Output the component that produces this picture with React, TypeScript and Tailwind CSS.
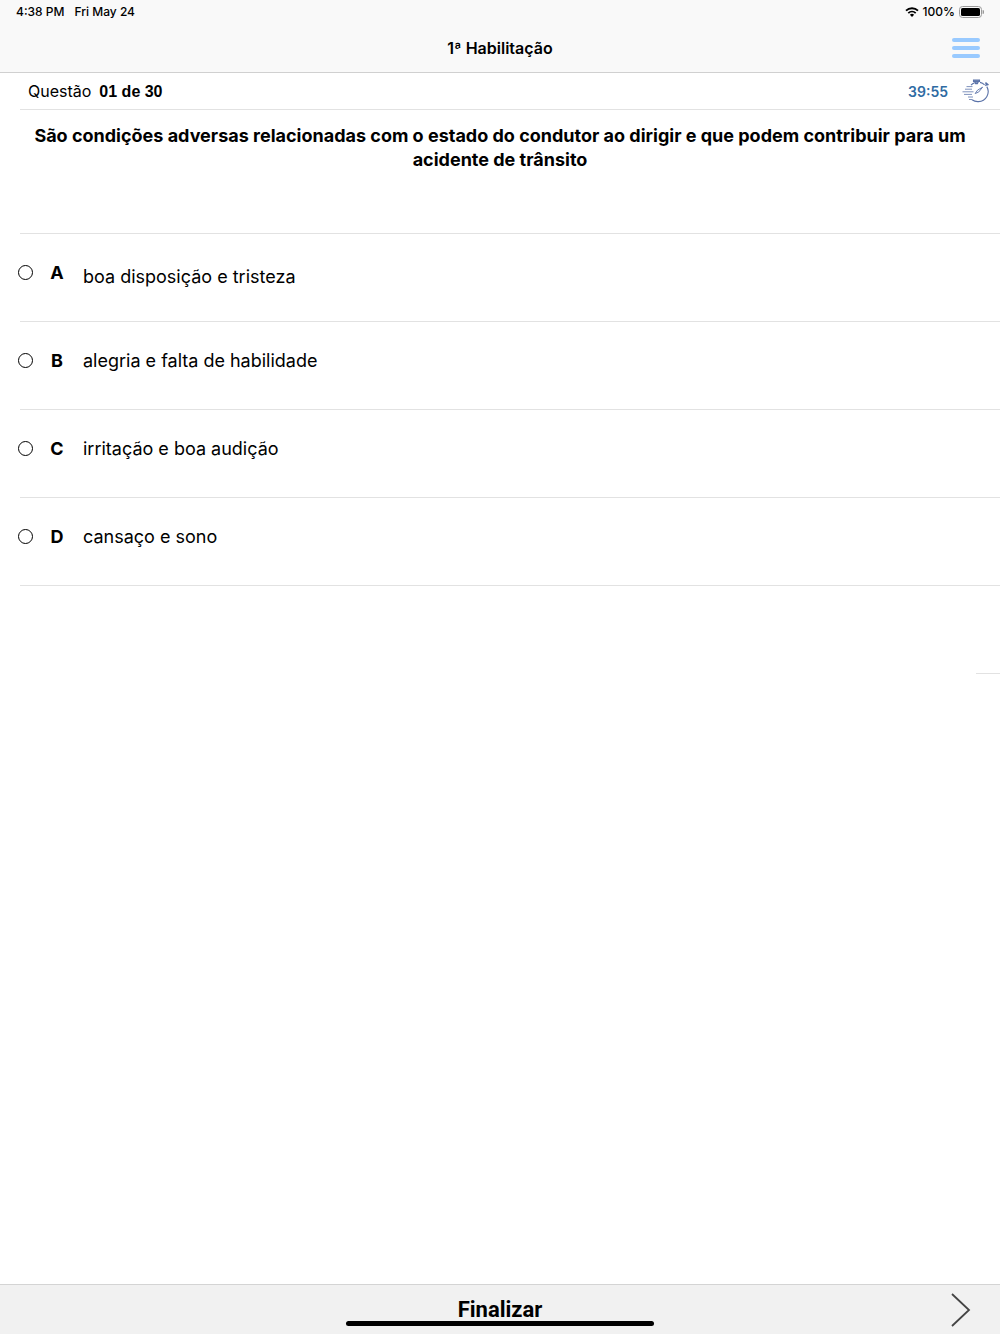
import React, { useState } from 'react';

interface Option {
  letter: string;
  text: string;
  leading: string;
}

const options: Option[] = [
  { letter: 'A', text: 'boa disposição e tristeza', leading: 'leading-8' },
  { letter: 'B', text: 'alegria e falta de habilidade', leading: 'leading-6' },
  { letter: 'C', text: 'irritação e boa audição', leading: 'leading-6' },
  { letter: 'D', text: 'cansaço e sono', leading: 'leading-6' },
];

const WifiIcon = () => (
  <svg width="14" height="10" viewBox="0 0 14 10" fill="none" stroke="#000" strokeWidth="1.8">
    <path d="M1 3.7a8.6 8.6 0 0 1 12 0" />
    <path d="M3.3 6.1a5.3 5.3 0 0 1 7.4 0" />
    <path d="M7 9.9 4.9 7.8a3 3 0 0 1 4.2 0z" fill="#000" stroke="none" />
  </svg>
);

const BatteryIcon = () => (
  <svg width="25" height="12" viewBox="0 0 25 12">
    <rect x="0.5" y="0.5" width="22" height="11" rx="3" fill="none" stroke="#9a9a9a" />
    <rect x="2" y="2" width="19" height="8" rx="1.6" fill="#000" />
    <path d="M23.6 4v4a2 2 0 0 0 0-4z" fill="#9a9a9a" />
  </svg>
);

const StopwatchIcon = () => (
  <svg width="28" height="24" viewBox="0 0 28 24" fill="none" stroke="#5a72a8" strokeWidth="1.1">
    <path d="M9 6.2A10.5 10.5 0 0 1 12.6 3.8M18 3.4a10 10 0 0 1 4.6 2.4M24.8 7.6A10 10 0 0 1 16.5 22.6a10 10 0 0 1-6.5-1.8" />
    <path d="M11.5 1h6v1.4h-6zM12.6 2.6h3.8l-1 2h-1.8z" fill="#8fa0c6" />
    <path d="m23.4 3.6 3 2.6M25 5l-1.6 1.8" strokeWidth="1.6" />
    <path d="m20.6 8.2-5 2.9-2.4 3.4 3.4-1.4z" strokeWidth="0.9" />
    <path d="M4.5 7.6h6M3 10.2h7M0.5 12.8h11M2 15.4h8M6 18h5M7 20.5h3" stroke="#7186b5" strokeWidth="0.9" />
  </svg>
);

const App: React.FC = () => {
  const [selected, setSelected] = useState<string | null>(null);

  return (
    <div className="flex min-h-screen flex-col bg-white font-['Inter',sans-serif] text-black">
      <header className="border-b border-[#d0d0d0] bg-[#f9f9f9]">
        <div className="flex h-6 items-center justify-between px-4 text-[12px] font-medium">
          <div className="flex gap-2.5">
            <span>4:38 PM</span>
            <span>Fri May 24</span>
          </div>
          <div className="flex items-center gap-1">
            <WifiIcon />
            <span>100%</span>
            <BatteryIcon />
          </div>
        </div>
        <div className="grid h-12 grid-cols-[1fr_auto_1fr] items-center px-5">
          <h1 className="col-start-2 text-[16px] font-semibold">1ª Habilitação</h1>
          <button type="button" aria-label="Menu" className="flex w-7 flex-col gap-1 justify-self-end">
            <span className="h-1 rounded-full bg-[#99caff]" />
            <span className="h-1 rounded-full bg-[#99caff]" />
            <span className="h-1 rounded-full bg-[#99caff]" />
          </button>
        </div>
      </header>

      <main className="flex-1">
        <div className="ml-5 flex h-[37px] items-center justify-between border-b border-[#e2e2e2] pr-2.5 pl-2">
          <p className="flex items-baseline gap-2 text-[16px]">
            <span>Questão</span>
            <strong className="font-['Liberation_Sans',sans-serif]">01 de 30</strong>
          </p>
          <div className="flex items-center gap-3.5">
            <span className="text-[14px] font-semibold text-[#2f6ba3]">39:55</span>
            <StopwatchIcon />
          </div>
        </div>

        <fieldset>
          <legend className="min-h-[123px] w-full px-6 pt-3.5 text-center text-[18px] leading-6 font-bold">
            São condições adversas relacionadas com o estado do condutor ao dirigir e que podem contribuir para um acidente de trânsito
          </legend>
          <div className="ml-5 border-t border-[#e2e2e2]">
            {options.map(option => (
              <label
                key={option.letter}
                className="flex min-h-[88px] items-start border-b border-[#e2e2e2] pt-[27px] text-[18px] leading-6"
              >
                <input
                  type="radio"
                  name="answer"
                  value={option.letter}
                  checked={selected === option.letter}
                  onChange={() => setSelected(option.letter)}
                  className="-ml-0.5 my-1 size-[15px] shrink-0 appearance-none rounded-full border border-black checked:bg-black"
                />
                <span className="ml-3 w-6 shrink-0 text-center font-bold">{option.letter}</span>
                <span className={`ml-3.5 ${option.leading}`}>{option.text}</span>
              </label>
            ))}
            <div className="ml-auto h-[88px] w-6 border-b border-[#e2e2e2]" />
          </div>
        </fieldset>
      </main>

      <footer className="relative grid h-[50px] grid-cols-[1fr_auto_1fr] items-center border-t border-[#d4d4d4] bg-[#f1f1f1] px-7">
        <button type="button" className="col-start-2 font-['Roboto',sans-serif] text-[22px] font-bold">
          Finalizar
        </button>
        <button type="button" aria-label="Próxima" className="justify-self-end">
          <svg width="22" height="34" viewBox="0 0 22 34" fill="none" stroke="#444" strokeWidth="1.8">
            <path d="M2 1 19 17 2 33" />
          </svg>
        </button>
        <div className="absolute bottom-2 left-1/2 h-[5px] w-[308px] -translate-x-1/2 rounded-full bg-black" />
      </footer>
    </div>
  );
};

export default App;
